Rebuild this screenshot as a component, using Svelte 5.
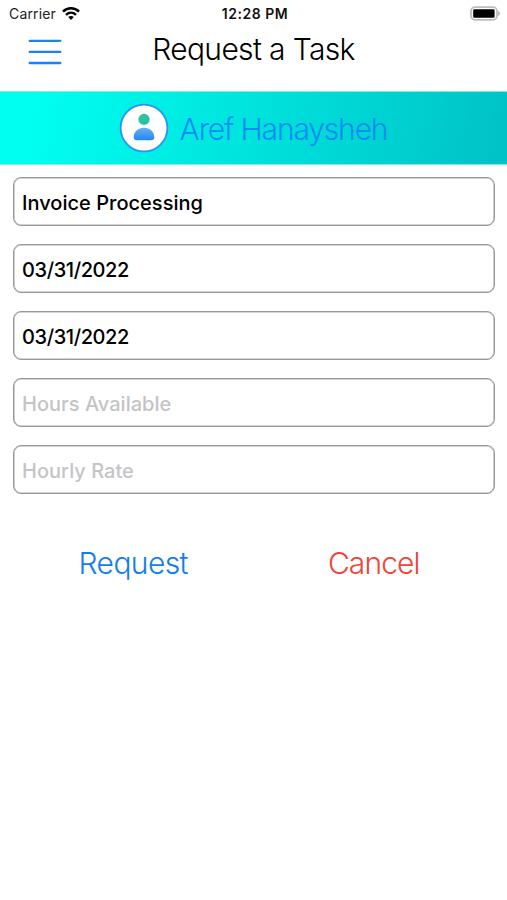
<script>
	const fields = [
		{ id: 'task', type: 'text', value: 'Invoice Processing', placeholder: 'Task' },
		{ id: 'start', type: 'date', value: '03/31/2022', placeholder: 'Start Date' },
		{ id: 'end', type: 'date', value: '03/31/2022', placeholder: 'End Date' },
		{ id: 'hours', type: 'number', value: '', placeholder: 'Hours Available' },
		{ id: 'rate', type: 'number', value: '', placeholder: 'Hourly Rate' }
	];
</script>

<main class="screen">
	<div class="status">
		<div class="carrier">
			<span>Carrier</span>
			<svg width="18" height="14" viewBox="0 0 18 14" fill="none" stroke="#000" stroke-width="2.5">
				<path d="M1 4.7C5.5.2 12.5.2 17 4.7" />
				<path d="M4 7.8c2.9-2.8 7.1-2.8 10 0" />
				<path d="M9 12.9 6.2 10.1c1.6-1.4 4-1.4 5.6 0z" fill="#000" stroke="none" />
			</svg>
		</div>
		<span class="time">12:28 PM</span>
		<div class="battery">
			<svg width="32" height="16" viewBox="0 0 32 16">
				<rect x="2" y="1.2" width="26" height="12.6" rx="4" fill="#fff" stroke="#bdbdbd" stroke-width="1.8" />
				<rect x="4.2" y="3.2" width="21.4" height="8.6" rx="1.2" fill="#000" />
				<path d="M29.2 5.1c2.2.8 2.2 4 0 4.8z" fill="#aaa" />
			</svg>
		</div>
	</div>

	<header class="nav">
		<button class="menu" type="button" aria-label="Menu">
			<svg width="34" height="27" viewBox="0 0 34 27" stroke="#1b82f2" stroke-width="2.3" stroke-linecap="round">
				<path d="M1.7 1.8h30.6M1.7 12.9h30.6M1.7 24h30.6" />
			</svg>
		</button>
		<h1>Request a Task</h1>
	</header>

	<section class="person">
		<svg width="50" height="50" viewBox="0 0 50 50">
			<defs>
				<linearGradient id="head" x1="0" y1="0" x2="1" y2="1">
					<stop offset="0" stop-color="#2cc994" />
					<stop offset="1" stop-color="#22bfae" />
				</linearGradient>
				<linearGradient id="torso" x1="0" y1="0" x2="0" y2="1">
					<stop offset="0" stop-color="#68aef5" />
					<stop offset="1" stop-color="#2586f0" />
				</linearGradient>
			</defs>
			<circle cx="25" cy="25" r="23.4" fill="#fff" stroke="#2b91f7" stroke-width="1.8" />
			<circle cx="25" cy="16.4" r="5.6" fill="url(#head)" />
			<path d="M14.7 34.2c0-5.6 4.7-9.4 10.3-9.4s10.3 3.8 10.3 9.4c0 2.1-1.1 3-3 3H17.7c-1.900 0-3-.9-3-3z" fill="url(#torso)" />
		</svg>
		<span class="name">Aref Hanaysheh</span>
	</section>

	<div class="form">
		{#each fields as field (field.id)}
			<div class="field" class:date={field.type === 'date'} class:empty={!field.value}>
				<span>{field.value || field.placeholder}</span>
			</div>
		{/each}
	</div>

	<div class="actions">
		<button class="request" type="button">Request</button>
		<button class="cancel" type="button">Cancel</button>
	</div>
</main>

<style>
	:global(body) {
		background: #fff;
	}

	.screen {
		min-height: 900px;
		background: #fff;
		color: #000;
		font-family: Inter, 'Liberation Sans', sans-serif;
	}

	.status {
		display: grid;
		grid-template-columns: 1fr auto 1fr;
		align-items: center;
		height: 27px;
		box-sizing: border-box;
		padding: 0 6px 0 9px;
		font-size: 14px;
		line-height: 26px;
	}

	.carrier {
		display: flex;
		align-items: center;
		gap: 6px;
		color: #222;
		letter-spacing: 0.15px;
	}

	.time {
		font-weight: 600;
		color: #111;
		letter-spacing: 0.5px;
	}

	.battery {
		display: flex;
		justify-content: flex-end;
	}

	svg {
		display: block;
		flex: none;
	}

	button {
		padding: 0;
		border: none;
		background: none;
		font: inherit;
		letter-spacing: inherit;
	}

	.nav {
		display: grid;
		grid-template-columns: 100px 1fr 100px;
		height: 64px;
	}

	.menu {
		align-self: start;
		justify-self: start;
		margin: 12px 0 0 28px;
	}

	h1 {
		margin: 2px 0 0;
		text-align: center;
		font-size: 30px;
		font-weight: 300;
		line-height: 40px;
		letter-spacing: -0.65px;
		white-space: nowrap;
	}

	.person {
		display: flex;
		align-items: center;
		justify-content: center;
		gap: 11px;
		height: 74px;
		box-sizing: border-box;
		padding-right: 1px;
		border-top: 1px solid #86e9e9;
		border-bottom: 1px solid #86e9e9;
		background: linear-gradient(100deg, #00fff0 7%, #00c3c8 97%);
		color: #078cf4;
		font-size: 30px;
		font-weight: 300;
		letter-spacing: -1.15px;
		white-space: nowrap;
	}

	.name {
		padding-top: 1px;
	}

	.form {
		display: grid;
		gap: 18.2px;
		padding: 11.6px 12px 0 13px;
	}

	.field {
		display: flex;
		align-items: center;
		height: 49px;
		box-sizing: border-box;
		padding: 3px 8px 0;
		border: 1px solid #999;
		border-radius: 8px;
		box-shadow: inset 0 0 0 0.6px #aaa;
		font-size: 20px;
		font-weight: 500;
		letter-spacing: 0.02px;
	}

	.date {
		letter-spacing: -0.4px;
	}

	.empty {
		color: #c4c4c6;
	}

	.actions {
		display: grid;
		grid-template-columns: 1fr 1fr;
		padding: 49px 13px 0;
		font-size: 30px;
		font-weight: 300;
		line-height: 40px;
		letter-spacing: -0.6px;
	}

	.request {
		color: #137df0;
	}

	.cancel {
		color: #f04438;
		letter-spacing: -0.9px;
	}
</style>
